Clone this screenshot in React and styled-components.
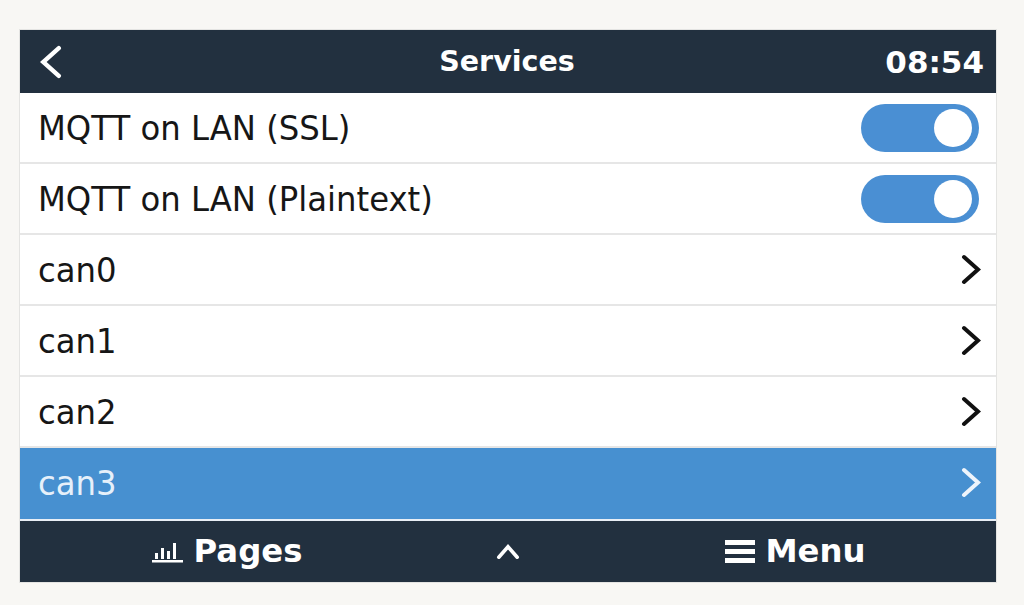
import styled, { createGlobalStyle } from 'styled-components';

const GlobalStyle = createGlobalStyle`
	html, body {
		margin: 0;
		padding: 0;
		background: #f8f7f4;
		font-family: 'DejaVu Sans', 'Liberation Sans', sans-serif;
	}
`;

const items = [
	{ label: 'MQTT on LAN (SSL)', type: 'switch', checked: true },
	{ label: 'MQTT on LAN (Plaintext)', type: 'switch', checked: true },
	{ label: 'can0', type: 'link' },
	{ label: 'can1', type: 'link' },
	{ label: 'can2', type: 'link' },
	{ label: 'can3', type: 'link', selected: true },
];

// chevron drawn in a box of w x h, pointing the given way
const Chevron = ({ dir = 'right', color = '#111', w = 22, h = 32, stroke = 3.4 }) => {
	const p = stroke / 2 + 1;
	const points = {
		right: `${p},${p} ${w - p},${h / 2} ${p},${h - p}`,
		left: `${w - p},${p} ${p},${h / 2} ${w - p},${h - p}`,
		up: `${p},${h - p} ${w / 2},${p} ${w - p},${h - p}`,
	}[dir];
	return (
		<svg width={w} height={h} viewBox={`0 0 ${w} ${h}`}>
			<polyline points={points} fill='none' stroke={color} strokeWidth={stroke} strokeLinecap='round' strokeLinejoin='miter' />
		</svg>
	);
};

const PagesIcon = () => (
	<svg width='33' height='24' viewBox='0 0 33 24'>
		<rect x='4' y='14' width='3' height='6' fill='#fff' />
		<rect x='10' y='9' width='3' height='11' fill='#fff' />
		<rect x='16' y='12' width='3' height='8' fill='#fff' />
		<rect x='22' y='4' width='3' height='16' fill='#fff' />
		<rect x='1' y='21' width='31' height='2.5' fill='#fff' />
	</svg>
);

const MenuIcon = () => (
	<svg width='30' height='26' viewBox='0 0 30 26'>
		<rect x='0' y='2' width='30' height='5' fill='#fff' />
		<rect x='0' y='11' width='30' height='5' fill='#fff' />
		<rect x='0' y='20' width='30' height='5' fill='#fff' />
	</svg>
);

const App = () => {
	return (
		<>
			<GlobalStyle />
			<Page>
				<Panel>
					<Header>
						<BackButton>
							<Chevron dir='left' color='#fff' w={22} h={34} stroke={4.4} />
						</BackButton>
						<Title>Services</Title>
						<Clock>08:54</Clock>
					</Header>
					<List>
						{items.map((item) => (
							<Row key={item.label} selected={item.selected}>
								<RowLabel selected={item.selected}>{item.label}</RowLabel>
								{item.type === 'switch' ? (
									<Switch checked={item.checked}>
										<Knob />
									</Switch>
								) : (
									<Chevron color={item.selected ? '#eef4fb' : '#111'} w={20} h={31} stroke={4} />
								)}
							</Row>
						))}
					</List>
					<Footer>
						<FooterButton>
							<PagesIcon />
							<span>Pages</span>
						</FooterButton>
						<FooterButton>
							<Chevron dir='up' color='#fff' w={24} h={16} stroke={3.6} />
						</FooterButton>
						<FooterButton shift='12px'>
							<MenuIcon />
							<span>Menu</span>
						</FooterButton>
					</Footer>
				</Panel>
			</Page>
		</>
	);
};

export default App;

const Page = styled.div`
	padding: 30px 28px 23px 20px;
	min-height: 605px;
	box-sizing: border-box;
`;

const Panel = styled.div`
	width: 976px;
	display: flex;
	flex-direction: column;
	background: #ffffff;
	box-shadow: 0 0 0 1px #e4e4e2;
`;

const Header = styled.div`
	height: 63px;
	background: #22303f;
	display: grid;
	grid-template-columns: 1fr auto 1fr;
	align-items: center;
	padding: 0 12px 0 18px;
	color: #ffffff;
`;

const BackButton = styled.div`
	display: flex;
	align-items: center;
	justify-self: start;
	padding-left: 2px;
`;

const Title = styled.div`
	font-weight: bold;
	font-size: 28.5px;
	margin-left: -8px;
`;

const Clock = styled.div`
	justify-self: end;
	font-weight: bold;
	font-size: 31px;
`;

const List = styled.div`
	display: flex;
	flex-direction: column;
`;

const Row = styled.div`
	height: 71px;
	box-sizing: border-box;
	display: flex;
	align-items: center;
	justify-content: space-between;
	padding: 0 15px 0 18px;
	background: ${({ selected }) => (selected ? '#4790d0' : '#ffffff')};
	border-bottom: 2px solid ${({ selected }) => (selected ? '#4790d0' : '#e6e6e6')};
`;

const RowLabel = styled.span`
	font-size: 32.3px;
	color: ${({ selected }) => (selected ? '#e6f0fa' : '#161616')};
	display: inline-block;
	transform: scaleY(1.05);
`;

const Switch = styled.div`
	width: 118px;
	height: 48px;
	border-radius: 24px;
	background: ${({ checked }) => (checked ? '#4a8fd3' : '#c8c8c8')};
	display: flex;
	align-items: center;
	justify-content: ${({ checked }) => (checked ? 'flex-end' : 'flex-start')};
	padding: 0 7px;
	box-sizing: border-box;
	margin-right: 2px;
`;

const Knob = styled.div`
	width: 38px;
	height: 38px;
	border-radius: 50%;
	background: #ffffff;
`;

const Footer = styled.div`
	height: 63px;
	background: #22303f;
	border-top: 2px solid #e8eef5;
	box-sizing: border-box;
	display: grid;
	grid-template-columns: 1fr 150px 1fr;
	align-items: center;
	color: #ffffff;
`;

const FooterButton = styled.div`
	display: flex;
	align-items: center;
	justify-content: center;
	gap: 10px;
	font-weight: bold;
	font-size: 32.3px;
	margin-left: ${({ shift }) => shift || '0'};

	span {
		line-height: 1;
	}
`;
